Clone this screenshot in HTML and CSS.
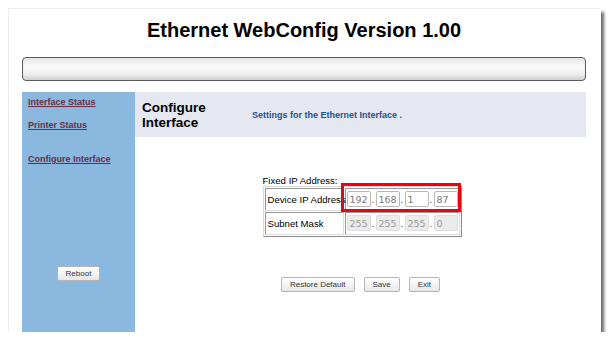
FILE: index.html
```html
<!DOCTYPE html>
<html lang="en">

<head>
  <meta charset="UTF-8" />
  <meta name="viewport" content="width=device-width, initial-scale=1.0" />
  <title>Ethernet WebConfig</title>
  <link rel="stylesheet" href="styles.css">
</head>

<body>
  <div class="page">
    <h1>Ethernet WebConfig Version 1.00</h1>

    <div class="status-bar"></div>

    <div class="content">
      <div class="side-menu">
        <a href="#" class="menu-link first">Interface Status</a>
        <a href="#" class="menu-link second">Printer Status</a>
        <a href="#" class="menu-link third">Configure Interface</a>
        <button class="btn reboot">Reboot</button>
      </div>

      <div class="main">
        <div class="main-header">
          <h2>Configure<br />Interface</h2>
          <p class="hint">Settings for the Ethernet Interface .</p>
        </div>

        <div class="ip-form">
          <label>Fixed IP Address:</label>
          <table class="ip-table">
            <tr>
              <td class="cell-label"><div>Device IP Address</div></td>
              <td>
                <div class="ip highlight">
                  <input type="text" value="192" />
                  <span class="dot">.</span>
                  <input type="text" value="168" />
                  <span class="dot">.</span>
                  <input type="text" value="1" />
                  <span class="dot">.</span>
                  <input type="text" value="87" />
                </div>
              </td>
            </tr>
            <tr>
              <td class="cell-label"><div>Subnet Mask</div></td>
              <td>
                <div class="ip">
                  <input type="text" value="255" disabled />
                  <span class="dot">.</span>
                  <input type="text" value="255" disabled />
                  <span class="dot">.</span>
                  <input type="text" value="255" disabled />
                  <span class="dot">.</span>
                  <input type="text" value="0" disabled />
                </div>
              </td>
            </tr>
          </table>
        </div>

        <div class="actions">
          <button class="btn">Restore Default</button>
          <button class="btn">Save</button>
          <button class="btn">Exit</button>
        </div>
      </div>
    </div>
  </div>
</body>

</html>
```

FILE: styles.css
```css
body {
  margin: 0;
  background: #fff;
  font-family: "Liberation Sans", Arial, sans-serif;
  color: #000;
}

.page {
  box-sizing: border-box;
  width: 592px;
  height: 323px;
  margin: 9px 0 0 9px;
  padding: 10px 15px 0 13px;
  background: #fff;
  box-shadow: -1px -1px 0 #ececec, 3px 3px 3px rgba(0, 0, 0, 0.6);
}

h1 {
  margin: 0 0 15px;
  font-size: 20px;
  line-height: 23px;
  text-align: center;
}

.status-bar {
  box-sizing: border-box;
  height: 24px;
  margin-bottom: 11px;
  border: 1px solid #5a5a5a;
  border-radius: 4px;
  background: linear-gradient(to bottom, #e4e4e4, #fbfbfb 40%, #ececec 75%, #cfcfcf);
}

.content {
  display: flex;
  height: 240px;
}

.side-menu {
  display: flex;
  flex-direction: column;
  width: 113px;
  padding: 5px 0 0 6px;
  box-sizing: border-box;
  background: #8bb8df;
}

.menu-link {
  font-size: 9px;
  font-weight: bold;
  line-height: 10px;
  color: #6b2c45;
}

.menu-link.second {
  margin-top: 13px;
}

.menu-link.third {
  margin-top: 24px;
}

.main {
  flex: 1;
}

.main-header {
  display: grid;
  grid-template-columns: 110px 1fr;
  align-items: center;
  height: 45px;
  padding-left: 7px;
  background: #e6e8f1;
}

.main-header h2 {
  margin: 0;
  font-size: 13.5px;
  line-height: 15px;
}

.hint {
  margin: 0;
  font-size: 9px;
  font-weight: bold;
  color: #1c5190;
}

.ip-form {
  width: fit-content;
  margin: 38px auto 0;
  padding-left: 3px;
  font-size: 10px;
}

.ip-form label {
  display: block;
  font-size: 9.6px;
  line-height: 11px;
}

.ip-table {
  border-collapse: separate;
  border-spacing: 1px;
  border: 1px solid;
  border-color: #d8d8d8 #8a8a8a #8a8a8a #d8d8d8;
}

.ip-table td {
  padding: 2px 1px 3px;
  border: 1px solid;
  border-color: #999 #dcdcdc #dcdcdc #999;
}

.cell-label div {
  width: 74px;
  padding-left: 1px;
  font-size: 9.6px;
  white-space: nowrap;
}

.ip {
  position: relative;
  display: flex;
  align-items: center;
}

.ip.highlight::after {
  content: "";
  position: absolute;
  top: -8px;
  bottom: -5px;
  left: -6px;
  right: -3px;
  border: 3px solid #e30613;
}

.ip input {
  box-sizing: border-box;
  width: 24px;
  height: 16px;
  padding: 0 2px;
  border: 1px solid #b9b9b9;
  border-radius: 2px;
  background: #fff;
  font-family: "DejaVu Sans", sans-serif;
  font-size: 9.5px;
  color: #7a7a7a;
}

.ip input:disabled {
  background: #ebebeb;
  border-color: #dedede;
  color: #9a9a9a;
}

.dot {
  width: 5px;
  text-align: center;
  color: #555;
}

.actions {
  display: flex;
  justify-content: center;
  gap: 9px;
  margin-top: 40px;
}

.btn {
  box-sizing: border-box;
  height: 15px;
  padding: 0 8px;
  border: 1px solid #b5b5b5;
  border-radius: 2px;
  background: linear-gradient(to bottom, #ffffff, #e8e8e8);
  font-family: "Liberation Sans", Arial, sans-serif;
  font-size: 8px;
  color: #333;
  cursor: pointer;
}

.reboot {
  align-self: center;
  margin: 102px 6px 0 0;
}
```
